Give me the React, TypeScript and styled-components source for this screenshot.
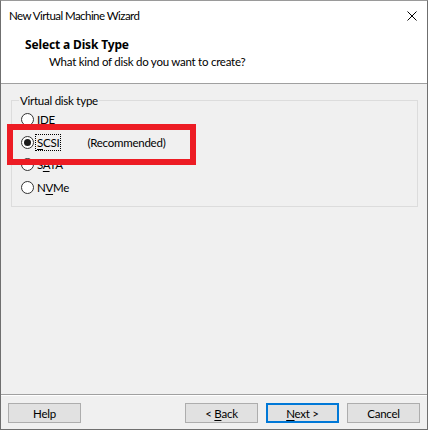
import React from "react";
import styled, { createGlobalStyle } from "styled-components";

const Global = createGlobalStyle`
  html, body { margin: 0; padding: 0; background: #f0f0f0; }
  * { box-sizing: border-box; }
`;

const FONT = `Lato, "Noto Sans", sans-serif`;

const Window = styled.div`
  position: relative;
  width: 428px;
  height: 430px;
  border: 1px solid #6f6f6f;
  border-top-color: #9a9a9a;
  background: #f0f0f0;
  display: flex;
  flex-direction: column;
  font-family: ${FONT};
  font-size: 11.5px;
  letter-spacing: -0.25px;
  color: #000;
`;

const TitleBar = styled.div`
  height: 29px;
  background: #fff;
  display: flex;
  align-items: center;
  justify-content: space-between;
  padding: 0 10px 0 8px;
`;

const TitleText = styled.span`
  font-size: 11.5px;
  letter-spacing: -0.55px;
  color: #000;
`;

const CloseIcon = styled.svg`
  width: 10px;
  height: 10px;
  display: block;
`;

const Header = styled.div`
  height: 54px;
  background: #fff;
  border-bottom: 1px solid #a0a0a0;
  display: flex;
  flex-direction: column;
  padding: 7px 0 0 24px;
`;

const HeaderTitle = styled.div`
  font-family: "Noto Sans", sans-serif;
  font-size: 12px;
  font-weight: 700;
  letter-spacing: -0.15px;
  line-height: 16px;
`;

const HeaderSub = styled.div`
  line-height: 16px;
  padding-left: 24px;
  margin-top: 1px;
`;

const Body = styled.div`
  flex: 1;
  padding: 9px 9px 0 10px;
`;

const Group = styled.fieldset`
  margin: 0;
  height: 114px;
  border: 1px solid #dcdcdc;
  padding: 0 0 0 9px;
`;

const Legend = styled.legend`
  padding: 0 1px;
  margin-left: -2px;
  line-height: 15px;
`;

const RadioList = styled.div`
  display: flex;
  flex-direction: column;
`;

const RadioRow = styled.div`
  display: flex;
  align-items: center;
  height: 22.7px;
`;

const RadioCircle = styled.span<{ $checked?: boolean }>`
  width: 13px;
  height: 13px;
  border-radius: 50%;
  border: 1px solid #333;
  background: #fff;
  display: flex;
  align-items: center;
  justify-content: center;
  margin-right: 1px;
  &::after {
    content: "";
    width: 7px;
    height: 7px;
    border-radius: 50%;
    background: #1a1a1a;
    display: ${(p) => (p.$checked ? "block" : "none")};
  }
`;

const Label = styled.span<{ $focus?: boolean }>`
  line-height: 15px;
  padding: 0 1px;
  border: 1px dotted ${(p) => (p.$focus ? "#000" : "transparent")};
`;

const Note = styled.span`
  margin-left: 26px;
`;

const Mn = styled.u`
  text-decoration-thickness: 1px;
  text-underline-offset: 2px;
`;

const Highlight = styled.div`
  position: absolute;
  left: 6px;
  top: 123px;
  width: 189px;
  height: 41px;
  border: 6px solid #ed1c24;
  pointer-events: none;
`;

const Footer = styled.div`
  height: 35px;
  border-top: 1px solid #a0a0a0;
  box-shadow: inset 0 1px 0 #fff;
  display: flex;
  align-items: flex-start;
  padding: 8px 7px 0 7px;
  gap: 8px;
`;

const Spacer = styled.div`
  flex: 1;
`;

const Button = styled.div<{ $default?: boolean }>`
  width: 73px;
  height: 20px;
  background: #e1e1e1;
  border: ${(p) => (p.$default ? "2px solid #0078d7" : "1px solid #adadad")};
  display: flex;
  align-items: center;
  justify-content: center;
  line-height: 15px;
`;

const ButtonLabel = styled.span`
  white-space: pre;
`;

export default function App() {
  return (
    <>
      <Global />
      <Window>
        <TitleBar>
          <TitleText>New Virtual Machine Wizard</TitleText>
          <CloseIcon viewBox="0 0 10 10">
            <path d="M0.5 0.5 L9.5 9.5 M9.5 0.5 L0.5 9.5" stroke="#000" strokeWidth="1" fill="none" />
          </CloseIcon>
        </TitleBar>
        <Header>
          <HeaderTitle>Select a Disk Type</HeaderTitle>
          <HeaderSub>What kind of disk do you want to create?</HeaderSub>
        </Header>
        <Body>
          <Group>
            <Legend>Virtual disk type</Legend>
            <RadioList>
              <RadioRow>
                <RadioCircle />
                <Label><Mn>I</Mn>DE</Label>
              </RadioRow>
              <RadioRow>
                <RadioCircle $checked />
                <Label $focus><Mn>S</Mn>CSI</Label>
                <Note>(Recommended)</Note>
              </RadioRow>
              <RadioRow>
                <RadioCircle />
                <Label>S<Mn>A</Mn>TA</Label>
              </RadioRow>
              <RadioRow>
                <RadioCircle />
                <Label>N<Mn>V</Mn>Me</Label>
              </RadioRow>
            </RadioList>
          </Group>
        </Body>
        <Footer>
          <Button><ButtonLabel>Help</ButtonLabel></Button>
          <Spacer />
          <Button><ButtonLabel>{"< "}<Mn>B</Mn>ack</ButtonLabel></Button>
          <Button $default><ButtonLabel><Mn>N</Mn>{"ext >"}</ButtonLabel></Button>
          <Button><ButtonLabel>Cancel</ButtonLabel></Button>
        </Footer>
        <Highlight />
      </Window>
    </>
  );
}
